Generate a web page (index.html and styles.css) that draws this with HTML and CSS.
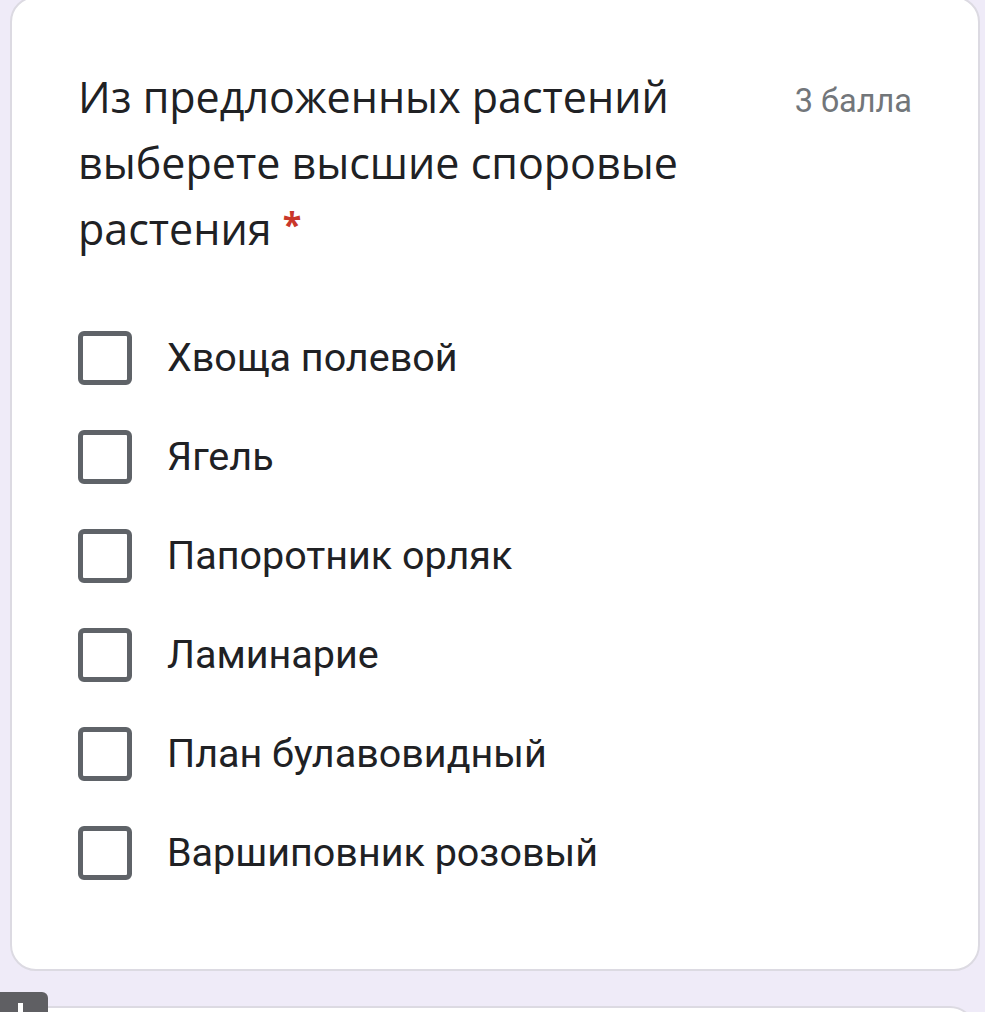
FILE: index.html
```html
<!DOCTYPE html>
<html lang="ru">
<head>
<meta charset="utf-8">
<link rel="stylesheet" href="styles.css">
</head>
<body>
<div class="page">
  <div class="card">
    <div class="header">
      <div class="title">Из предложенных растений выберете высшие споровые растения <span class="req">*</span></div>
      <div class="points">3 балла</div>
    </div>
    <div class="options">
      <div class="option"><span class="box"></span><span class="label">Хвоща полевой</span></div>
      <div class="option"><span class="box"></span><span class="label">Ягель</span></div>
      <div class="option"><span class="box"></span><span class="label">Папоротник орляк</span></div>
      <div class="option"><span class="box"></span><span class="label">Ламинарие</span></div>
      <div class="option"><span class="box"></span><span class="label">План булавовидный</span></div>
      <div class="option"><span class="box"></span><span class="label">Варшиповник розовый</span></div>
    </div>
  </div>
  <div class="card next"></div>
  <div class="fab"><span class="fab-bar"></span></div>
</div>
</body>
</html>
```

FILE: styles.css
```css
html, body {
  margin: 0;
  padding: 0;
  background: #efebf8;
  height: 100%;
  overflow: hidden;
}
.page {
  position: relative;
  height: 1012px;
  overflow: hidden;
}
.card {
  background: #ffffff;
  border: 2px solid #dcdae2;
  border-radius: 26px;
  margin: -4px 5px 0 10px;
  padding: 66px 66px 67px 66px;
}
.header {
  display: flex;
  justify-content: space-between;
  align-items: flex-start;
}
.title {
  font-family: "Open Sans", "Noto Sans", sans-serif;
  font-size: 43px;
  line-height: 66px;
  color: #202124;
  max-width: 640px;
}
.req {
  color: #c9372a;
  font-size: 34px;
  font-weight: 700;
  vertical-align: 8px;
  line-height: 1;
}
.points {
  font-family: Roboto, "Noto Sans", sans-serif;
  font-size: 32.5px;
  line-height: 66px;
  color: #72767a;
  margin-top: 4px;
}
.options {
  display: flex;
  flex-direction: column;
  margin-top: 46px;
}
.option {
  display: flex;
  align-items: center;
  height: 99px;
  gap: 35px;
}
.box {
  width: 44px;
  height: 44px;
  border: 5px solid #5f6368;
  border-radius: 6px;
  flex: none;
}
.label {
  font-family: Roboto, "Noto Sans", sans-serif;
  font-size: 39.5px;
  color: #202124;
}
.card.next {
  margin-top: 35px;
  height: 200px;
  padding: 0;
  margin-left: 12px;
  margin-right: 9px;
}
.fab {
  position: absolute;
  left: 0;
  top: 992px;
  width: 48px;
  height: 40px;
  background: #5f5f63;
  border-radius: 0 6px 0 0;
}
.fab-bar {
  position: absolute;
  left: 18px;
  top: 11px;
  width: 5px;
  height: 20px;
  background: #ffffff;
}
```
